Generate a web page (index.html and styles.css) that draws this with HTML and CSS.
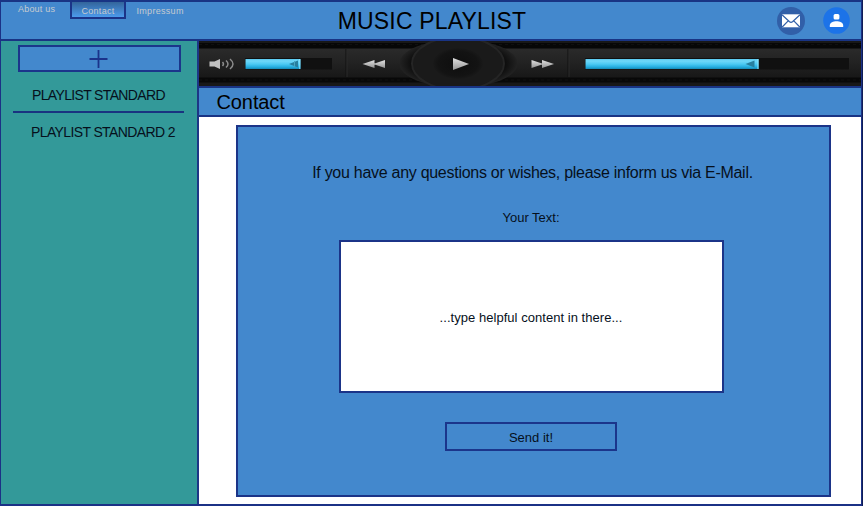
FILE: index.html
```html
<!DOCTYPE html>
<html lang="en">
<head>
<meta charset="utf-8">
<title>Music Playlist</title>
<link rel="stylesheet" href="styles.css">
</head>
<body>
<div class="app">
  <header class="header">
    <nav class="nav">
      <a class="nav-link about">About us</a>
      <a class="nav-link active">Contact</a>
      <a class="nav-link impressum">Impressum</a>
    </nav>
    <h1 class="title">MUSIC PLAYLIST</h1>
    <div class="actions">
      <svg width="28" height="28" viewBox="0 0 28 28"><circle cx="14" cy="14" r="14" fill="#315fa8"/><path d="M5 7.300h18v13H5z" fill="#fff"/><path d="M5 7.800l7.500 7q1.500 1.300 3 0l7.500-7M5.200 20l6-6.200M22.800 20l-6-6.200" fill="none" stroke="#315fa8" stroke-width="1.200"/></svg>
      <svg width="27" height="27" viewBox="0 0 27 27"><circle cx="13.5" cy="13.5" r="13.3" fill="#1c73e8"/><rect x="10.600" y="7" width="5.800" height="5.500" rx="1.500" fill="#fff"/><path d="M6.800 20v-1.600c0-3 3.600-4.200 6.700-4.200s6.700 1.200 6.700 4.200V20z" fill="#fff"/></svg>
    </div>
  </header>
  <div class="body">
    <aside class="sidebar">
      <button class="add" aria-label="Add playlist"><svg width="20" height="20" viewBox="0 0 20 20"><path d="M.5 10h18M9.500 1v18" stroke="#1b338b" stroke-width="1.800"/></svg></button>
      <div class="playlist first">PLAYLIST STANDARD</div>
      <div class="playlist second">PLAYLIST STANDARD 2</div>
    </aside>
    <main class="main">
      <svg class="player" viewBox="199 41 662 45" preserveAspectRatio="none">
        <defs>
          <linearGradient id="base" x2="0" y2="1"><stop stop-color="#2a2a2a"/><stop offset=".5" stop-color="#222"/><stop offset="1" stop-color="#181818"/></linearGradient>
          <linearGradient id="fill" x2="0" y2="1"><stop stop-color="#58c8ef"/><stop offset=".2" stop-color="#70d7f8"/><stop offset=".5" stop-color="#4dcaf3"/><stop offset=".8" stop-color="#24ade0"/><stop offset="1" stop-color="#1688b5"/></linearGradient>
          <linearGradient id="icon" x2="0" y2="1"><stop stop-color="#e0e0e0"/><stop offset="1" stop-color="#969696"/></linearGradient>
          <radialGradient id="disc"><stop stop-color="#0e0e0e"/><stop offset=".8" stop-color="#131313"/><stop offset="1" stop-color="#191919"/></radialGradient>
          <radialGradient id="halo"><stop offset=".8" stop-color="#0e0e0e"/><stop offset="1" stop-color="#222"/></radialGradient>
        </defs>
        <rect x="199" y="41" width="662" height="45" fill="#181818"/>
        <rect x="199" y="43" width="662" height="5" fill="#070707"/>
        <rect x="199" y="49" width="662" height="28" fill="url(#base)"/>
        <rect x="199" y="77.500" width="662" height="5" fill="#080808"/>
        <path d="M199 44.500h662M199 80h662" stroke="#101010" stroke-dasharray="3 3"/>
        <path d="M346 49v28M568 49v28" stroke="#111"/><path d="M347 49v28M569 49v28" stroke="#2b2b2b"/>
        <ellipse cx="458.500" cy="63.500" rx="59" ry="24" fill="url(#halo)"/>
        <ellipse cx="458" cy="63.500" rx="46" ry="26.500" fill="#1a1a1a" stroke="#252525" stroke-width="2"/>
        <ellipse cx="458" cy="63.500" rx="25" ry="15.500" fill="url(#disc)"/>
        <path d="M453 58l16 6-16 6z" fill="url(#icon)"/>
        <path d="M374.500 60v8l-12-4zM385 60v8l-12-4zM531.500 60v8l12-4zM542 60v8l12-4z" fill="url(#icon)"/>
        <path d="M209.500 61.500h5l5.500-2.500v10l-5.500-2.500h-5z" fill="#c1c1c1"/>
        <path d="M222.500 62q2 2 0 4M226 60.500q4 3.500 0 7M230 59q6 5 0 10" fill="none" stroke="#8c8c8c" stroke-width="1.500"/>
        <rect x="245" y="58" width="87" height="11.500" fill="#101010"/>
        <rect x="245.500" y="59" width="55" height="10" fill="url(#fill)"/>
        <path d="M299.800 59v10" stroke="#91e5fd"/><path d="M298 60.500v7l-9-3.500z" fill="#277f9f"/><path d="M294.500 61v6" stroke="#47a5c3"/>
        <rect x="585" y="58" width="264" height="11.500" fill="#101010"/>
        <rect x="585.500" y="59" width="173" height="10" fill="url(#fill)"/>
        <path d="M758 59v10" stroke="#91e5fd"/><path d="M754.500 60.500v7l-9-3.500z" fill="#277f9f"/>
      </svg>
      <h2 class="heading">Contact</h2>
      <div class="content">
        <section class="panel">
          <p class="intro">If you have any questions or wishes, please inform us via E-Mail.</p>
          <p class="label">Your Text:</p>
          <div class="message">...type helpful content in there...</div>
          <button class="send">Send it!</button>
        </section>
      </div>
    </main>
  </div>
</div>
</body>
</html>
```
FILE: styles.css
```css
* { box-sizing: border-box; }
body { margin: 0; background: #101d55; font-family: "Liberation Sans", Arial, sans-serif; color: #06101c; }
button { font: inherit; color: inherit; padding: 0; }
h1, h2, p { margin: 0; font-weight: 400; }
.app { width: 862px; height: 506px; display: flex; flex-direction: column; border: solid #1b3186; border-width: 0 1px 2px; overflow: hidden; background: #fff; }
.header { height: 41px; flex: none; display: grid; grid-template-columns: 300px 1fr 300px; background: #4388cd; border: solid #193484; border-width: 2px 0; }
.nav { display: flex; align-items: flex-start; font-size: 9px; line-height: 15px; color: #c6cbd0; white-space: nowrap; }
.nav-link { display: block; }
.about { margin-left: 17px; width: 52px; letter-spacing: .2px; }
.active { width: 56px; height: 17px; border: 2px solid #1b3488; border-top: 0; background: linear-gradient(#33659b, #4c9aec); text-align: center; line-height: 18px; letter-spacing: .3px; }
.impressum { margin-left: 10.5px; line-height: 18px; letter-spacing: .3px; }
.title { text-align: center; font-size: 23px; line-height: 38px; letter-spacing: .16px; padding-left: 2px; white-space: nowrap; color: #000; }
.actions { display: flex; justify-content: flex-end; gap: 18px; padding: 5px 11px 0 0; }
.body { display: flex; flex: 1; min-height: 0; }
.sidebar { width: 198px; flex: none; background: #339999; border-right: 2px solid #1d3686; padding: 4px 0 0 17px; }
.add { width: 163px; height: 27px; display: flex; align-items: center; justify-content: center; background: #4388cd; border: 2px solid #1b358b; }
.add svg { margin-right: 2px; }
.playlist { font-size: 14px; letter-spacing: -.65px; white-space: nowrap; }
.first { width: 171px; margin-left: -5px; height: 41px; padding: 14px 0 0 19px; line-height: 18px; border-bottom: 2px solid #193380; }
.second { padding-left: 13px; line-height: 38px; letter-spacing: -.62px; }
.main { flex: 1; display: flex; flex-direction: column; min-width: 0; }
.player { display: block; width: 100%; height: 45px; }
.heading { height: 31px; background: #4388cd; border: solid #193484; border-width: 2px 0; padding-left: 17.5px; font-size: 20px; line-height: 28px; letter-spacing: -.1px; color: #000; }
.content { flex: 1; padding: 8px 30px 7px 37px; }
.panel { height: 372px; border: 2px solid #1b3488; background: #4388cd; display: flex; flex-direction: column; align-items: center; padding-right: 5px; }
.intro { margin-top: 36px; margin-left: 3px; font-size: 16px; line-height: 20px; letter-spacing: -.28px; white-space: nowrap; }
.label { margin-top: 26px; font-size: 13px; line-height: 18px; }
.message { margin-top: 13px; width: 385px; height: 153px; flex: none; display: flex; align-items: center; justify-content: center; padding-top: 2px; border: 2px solid #1b3488; background: #fff; font-size: 13px; letter-spacing: .04px; }
.send { margin-top: 29px; width: 172px; height: 29px; padding-top: 2px; border: 2px solid #1b358b; background: transparent; font-size: 13px; }
```
